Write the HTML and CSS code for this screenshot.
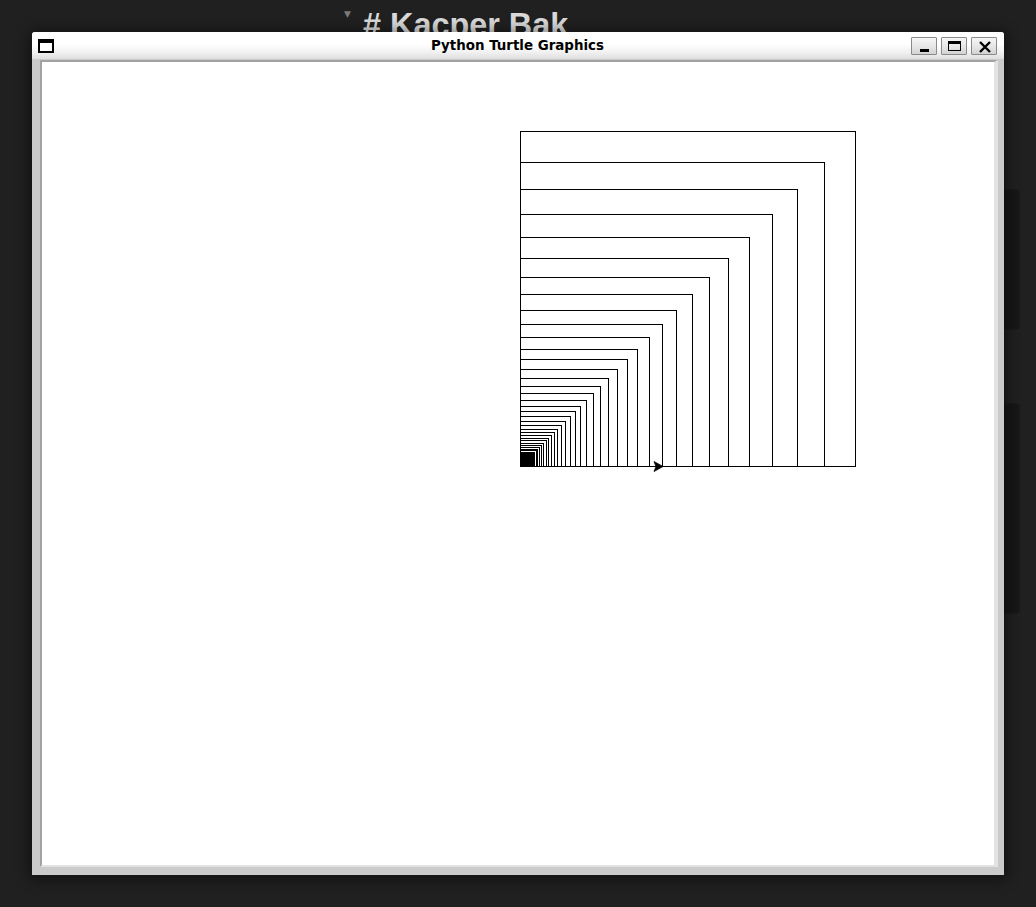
FILE: index.html
```html
<!DOCTYPE html>
<html lang="en">
<head>
<meta charset="utf-8">
<title>Python Turtle Graphics</title>
<link rel="stylesheet" href="styles.css">
</head>
<body>
<div class="desktop">
  <div class="bg-page">
    <span class="bg-caret">&#9660;</span>
    <h1 class="bg-heading"># Kacper Bak</h1>
    <div class="bg-panel bg-panel-a"></div>
    <div class="bg-panel bg-panel-b"></div>
  </div>

  <div class="window">
    <div class="titlebar">
      <div class="tb-left"><span class="app-icon"></span></div>
      <div class="tb-title">Python Turtle Graphics</div>
      <div class="tb-right">
        <button class="wbtn" aria-label="Minimize">
          <svg width="24" height="16" viewBox="0 0 24 16"><rect x="8" y="11" width="9" height="3" fill="#000"/></svg>
        </button>
        <button class="wbtn" aria-label="Maximize">
          <svg width="24" height="16" viewBox="0 0 24 16"><rect x="6.5" y="3.5" width="12" height="9" fill="none" stroke="#000" stroke-width="1"/><rect x="6" y="3" width="13" height="3" fill="#000"/></svg>
        </button>
        <button class="wbtn" aria-label="Close">
          <svg width="24" height="16" viewBox="0 0 24 16"><path d="M8 4 L18 14 M18 4 L8 14" stroke="#000" stroke-width="2.4" fill="none"/></svg>
        </button>
      </div>
    </div>
    <div class="wbody">
      <div class="canvas-frame">
        <svg class="turtle-canvas" width="952" height="803" viewBox="0 0 952 803">
          <g fill="none" stroke="#000" stroke-width="1" shape-rendering="crispEdges">
            <rect x="478.5" y="69.5" width="335" height="335"/>
            <rect x="478.5" y="100.5" width="304" height="304"/>
            <rect x="478.5" y="127.5" width="277" height="277"/>
            <rect x="478.5" y="152.5" width="252" height="252"/>
            <rect x="478.5" y="175.5" width="229" height="229"/>
            <rect x="478.5" y="196.5" width="208" height="208"/>
            <rect x="478.5" y="215.5" width="189" height="189"/>
            <rect x="478.5" y="232.5" width="172" height="172"/>
            <rect x="478.5" y="248.5" width="156" height="156"/>
            <rect x="478.5" y="262.5" width="142" height="142"/>
            <rect x="478.5" y="275.5" width="129" height="129"/>
            <rect x="478.5" y="287.5" width="117" height="117"/>
            <rect x="478.5" y="297.5" width="107" height="107"/>
            <rect x="478.5" y="307.5" width="97" height="97"/>
            <rect x="478.5" y="316.5" width="88" height="88"/>
            <rect x="478.5" y="324.5" width="80" height="80"/>
            <rect x="478.5" y="331.5" width="73" height="73"/>
            <rect x="478.5" y="338.5" width="66" height="66"/>
            <rect x="478.5" y="344.5" width="60" height="60"/>
            <rect x="478.5" y="349.5" width="55" height="55"/>
            <rect x="478.5" y="354.5" width="50" height="50"/>
            <rect x="478.5" y="359.5" width="45" height="45"/>
            <rect x="478.5" y="363.5" width="41" height="41"/>
            <rect x="478.5" y="367.5" width="37" height="37"/>
            <rect x="478.5" y="370.5" width="34" height="34"/>
            <rect x="478.5" y="373.5" width="31" height="31"/>
            <rect x="478.5" y="376.5" width="28" height="28"/>
            <rect x="478.5" y="378.5" width="26" height="26"/>
            <rect x="478.5" y="381.5" width="23" height="23"/>
            <rect x="478.5" y="383.5" width="21" height="21"/>
            <rect x="478.5" y="385.5" width="19" height="19"/>
            <rect x="478.5" y="387.5" width="17" height="17"/>
            <rect x="478.5" y="388.5" width="16" height="16"/>
          </g>
          <rect x="478" y="390" width="15" height="15" fill="#000"/>
          <polygon points="621,404.5 612,399.5 614,404.5 612,409.5" fill="#000" stroke="#000" stroke-width="0.8"/>
        </svg>
      </div>
    </div>
  </div>
</div>
</body>
</html>
```

FILE: styles.css
```css
* { box-sizing: border-box; }

html, body {
  margin: 0;
  padding: 0;
  background: #202020;
}

.desktop {
  position: relative;
  width: 1036px;
  height: 907px;
  overflow: hidden;
  background: #202020;
}

.bg-page {
  position: absolute;
  inset: 0;
}

.bg-caret {
  position: absolute;
  left: 344px;
  top: 9px;
  font: 9px "DejaVu Sans", sans-serif;
  color: #7a7a7a;
}

.bg-heading {
  position: absolute;
  left: 363px;
  top: 9px;
  margin: 0;
  font: bold 32.4px/32px "Liberation Sans", Arial, sans-serif;
  color: #d9d9d9;
  white-space: nowrap;
}

.bg-panel {
  position: absolute;
  left: 940px;
  width: 80px;
  background: #171717;
  border: 1px solid #1b1b1b;
  border-radius: 4px;
}

.bg-panel-a { top: 189px; height: 141px; }
.bg-panel-b { top: 403px; height: 211px; }

.window {
  position: absolute;
  left: 32px;
  top: 32px;
  width: 972px;
  height: 843px;
  display: flex;
  flex-direction: column;
  background: #cbcbcb;
  border-radius: 3px 3px 0 0;
  box-shadow: 0 2px 14px 3px rgba(0, 0, 0, 0.45);
}

.titlebar {
  height: 27px;
  flex: none;
  display: grid;
  grid-template-columns: 1fr auto 1fr;
  align-items: center;
  padding: 0 7px 0 6px;
  border-radius: 3px 3px 0 0;
  background: linear-gradient(to bottom, #ffffff 0%, #ffffff 45%, #f1f1f1 75%, #dedede 100%);
}

.tb-left {
  display: flex;
  align-items: center;
}

.app-icon {
  display: block;
  width: 16px;
  height: 14px;
  border: 2px solid #000;
  border-top-width: 4px;
  background: #fff;
}

.tb-title {
  font: bold 13.4px "DejaVu Sans", sans-serif;
  color: #000;
  white-space: nowrap;
}

.tb-right {
  display: flex;
  justify-content: flex-end;
  gap: 4px;
}

.wbtn {
  width: 26px;
  height: 18px;
  padding: 0;
  margin: 0;
  border: 1px solid #8a8a8a;
  border-radius: 1px;
  background: linear-gradient(to bottom, #f6f6f6 0%, #e4e4e4 60%, #d2d2d2 100%);
  display: block;
}

.wbtn svg {
  display: block;
}

.wbody {
  flex: 1;
  padding: 1px 6px 8px 8px;
  display: flex;
}

.canvas-frame {
  border-top: 2px solid #a2a2a2;
  border-left: 2px solid #a2a2a2;
  border-bottom: 2px solid #e3e3e3;
  border-right: 4px solid #e3e3e3;
  background: #fff;
  width: 958px;
  height: 807px;
}

.turtle-canvas {
  display: block;
  background: #fff;
}
```
